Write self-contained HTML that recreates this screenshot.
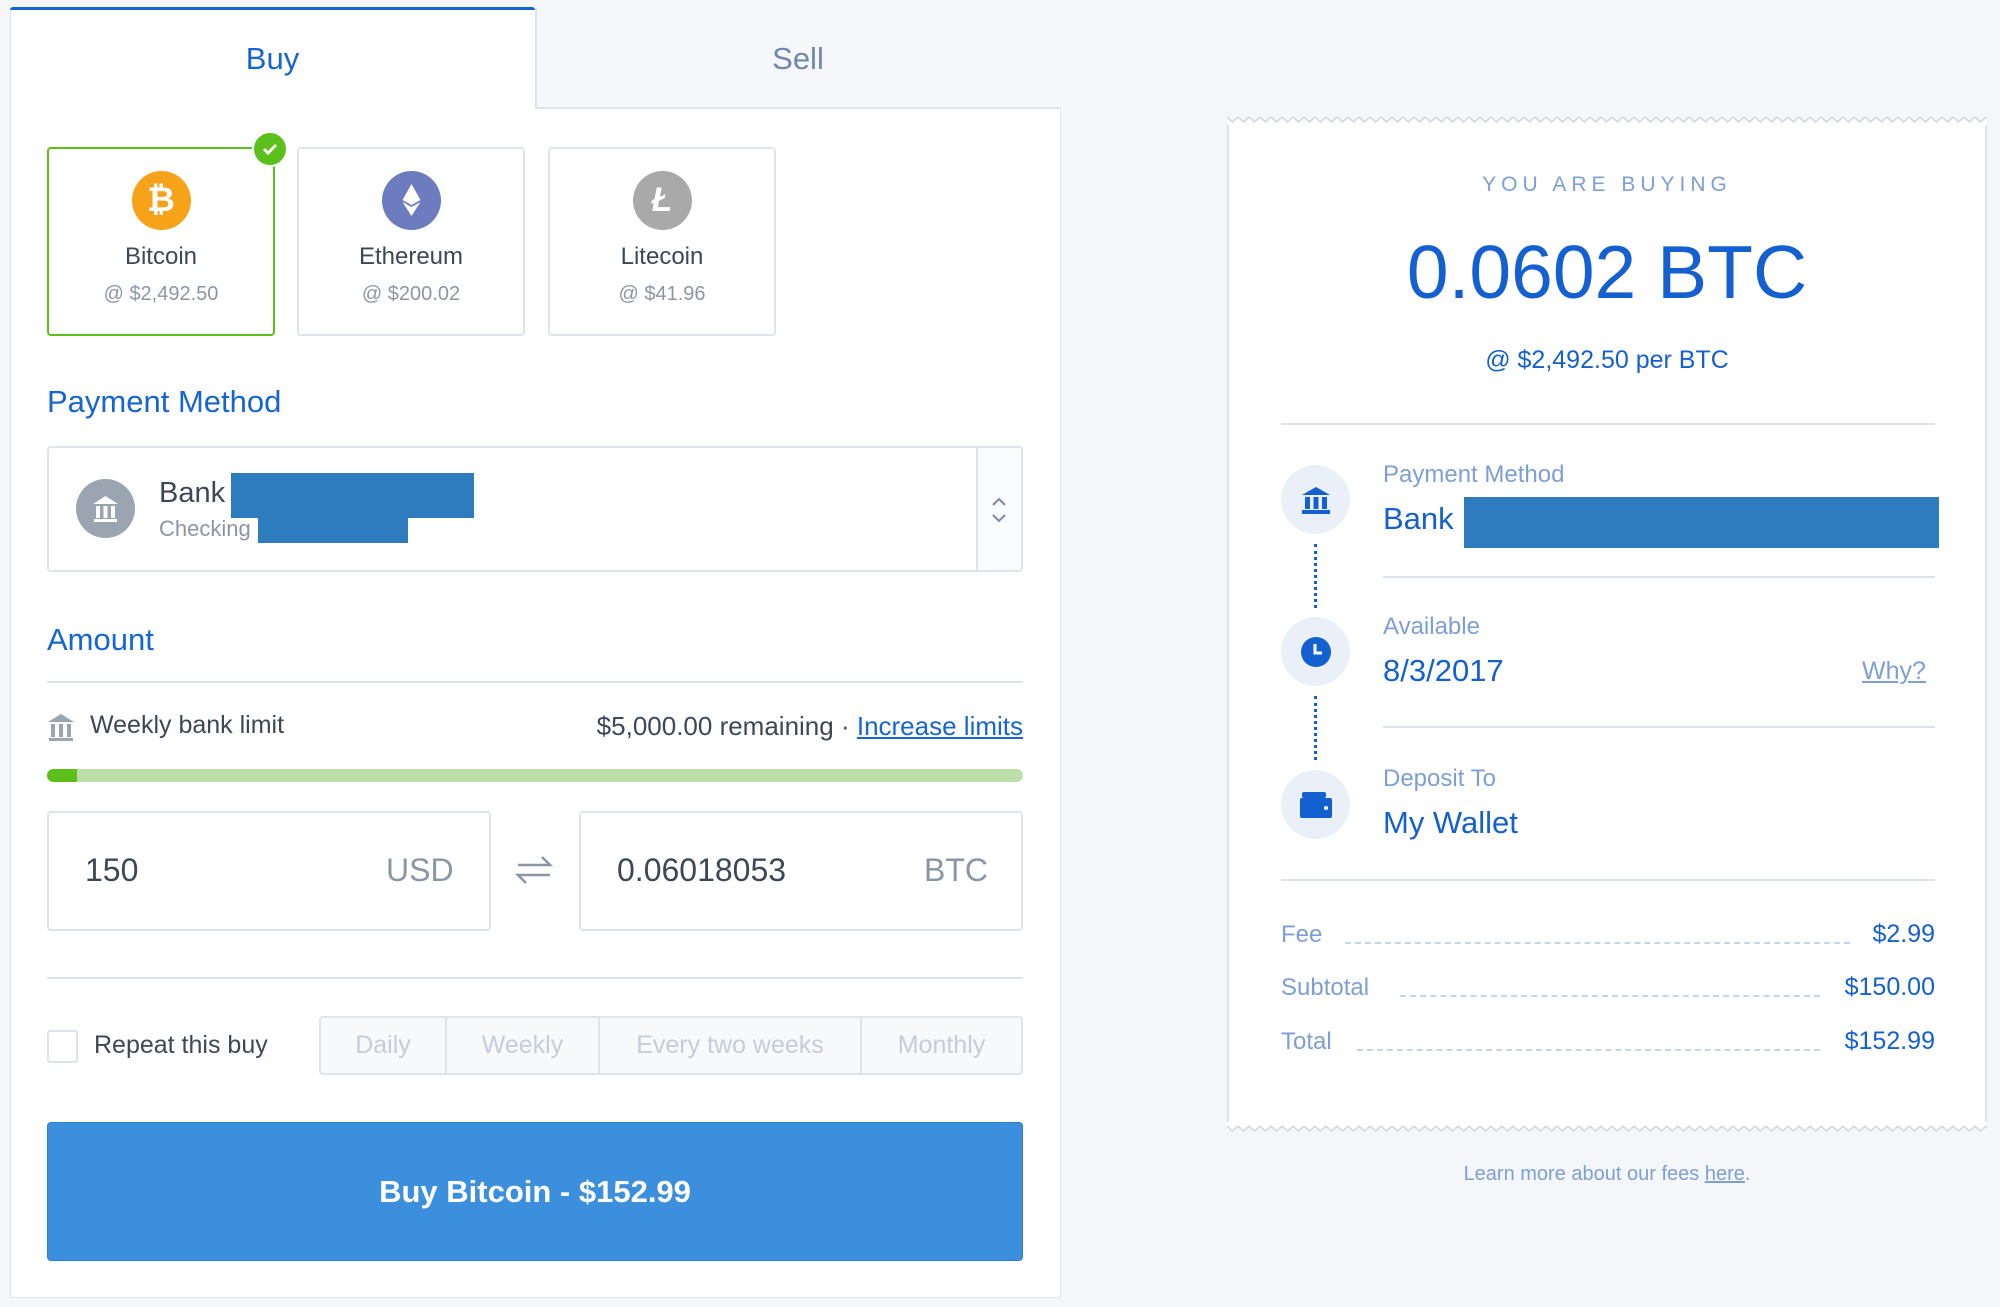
<!DOCTYPE html>
<html><head><meta charset="utf-8">
<style>
*{margin:0;padding:0;box-sizing:border-box}
body{width:2000px;height:1307px;background:#f4f6fa;font-family:"Liberation Sans",sans-serif;position:relative;overflow:hidden}
.a{position:absolute}
.panel{left:10px;top:8px;width:1051px;height:1290px;background:#fff;border:1px solid #dde3ec;border-radius:3px}
.tab{top:8px;height:101px;font-size:31px;display:flex;align-items:center;justify-content:center}
.card{top:147px;width:228px;height:189px;border:2px solid #dfe4ec;border-radius:4px;text-align:center;background:#fff}
.coin{width:59px;height:59px;border-radius:50%;margin:22px auto 0;color:#fff;font-weight:bold;font-size:34px;line-height:59px}
.nm{font-size:24px;color:#3c4858;margin-top:13px}
.pr{font-size:20px;color:#8b96a5;margin-top:12px}
.h{font-size:31px;color:#1565d4;left:47px}
.box{border:2px solid #dfe4ec;border-radius:4px;background:#fff}
.hr{height:2px;background:#dde3ec}
.lbl{font-size:24px;color:#7d9fd6}
.val{font-size:31px;color:#1560d0}
.ic{width:69px;height:69px;border-radius:50%;background:#eaf0f8;left:1281px;display:flex;align-items:center;justify-content:center}
.dots{border-left:3px dotted #1560d0;width:0;left:1314px}
.fl{font-size:24px;color:#7d9fd6;left:1281px}
.fv{font-size:25px;color:#1560d0;right:65px}
.dl{border-top:2px dashed #c6d4ea;height:0}
</style></head><body>
<div class="a panel"></div>
<div class="a" style="left:535px;top:8px;width:526px;height:101px;background:#f5f7fa;border-left:2px solid #dfe4ec;border-bottom:2px solid #dfe4ec"></div>
<div class="a" style="left:10px;top:7px;width:525px;height:3px;background:#1565d4;border-radius:3px 3px 0 0"></div>
<div class="a tab" style="left:10px;width:525px;color:#1565d4">Buy</div>
<div class="a tab" style="left:535px;width:526px;color:#6f87ae">Sell</div>

<div class="a card" style="left:47px;border-color:#5cc01c"><div class="coin" style="background:#f7a31a">&#8383;</div><div class="nm">Bitcoin</div><div class="pr">@ $2,492.50</div></div>
<div class="a" style="left:252px;top:131px;width:36px;height:36px;border-radius:50%;background:#5cc01c;border:2px solid #fff"><svg width="32" height="32" viewBox="0 0 32 32"><path d="M10 16l4 4 8-8" stroke="#fff" stroke-width="3" fill="none"/></svg></div>
<div class="a card" style="left:297px"><div class="coin" style="background:#6d7bbf"><svg width="59" height="59" viewBox="0 0 59 59"><path d="M29.5 13l-9 16 9 5 9-5z" fill="#fff"/><path d="M20.5 31l9 14 9-14-9 5z" fill="#fff"/></svg></div><div class="nm">Ethereum</div><div class="pr">@ $200.02</div></div>
<div class="a card" style="left:548px"><div class="coin" style="background:#a9a9a9;font-style:italic">Ł</div><div class="nm">Litecoin</div><div class="pr">@ $41.96</div></div>

<div class="a h" style="top:384px">Payment Method</div>
<div class="a box" style="left:47px;top:446px;width:976px;height:126px"></div>
<div class="a" style="left:976px;top:448px;width:45px;height:122px;border-left:2px solid #dfe4ec;background:#fafbfd"></div>
<svg class="a" style="left:988px;top:495px" width="22" height="30" viewBox="0 0 22 30"><path d="M5 10l6-6 6 6M5 20l6 6 6-6" stroke="#7d8ba0" stroke-width="2" fill="none"/></svg>
<div class="a" style="left:76px;top:479px;width:59px;height:59px;border-radius:50%;background:#9aa5b1"><svg width="59" height="59" viewBox="0 0 59 59"><path d="M17 25l12.5-8 12.5 8z M18 40h23v3H18z M20 27h4v12h-4z M27.5 27h4v12h-4z M35 27h4v12h-4z" fill="#fff"/></svg></div>
<div class="a" style="left:159px;top:477px;font-size:29px;color:#3c4858">Bank</div>
<div class="a" style="left:159px;top:516px;font-size:22px;color:#8b96a5">Checking</div>
<div class="a" style="left:231px;top:473px;width:243px;height:45px;background:#2e7bbd"></div>
<div class="a" style="left:258px;top:517px;width:150px;height:26px;background:#2e7bbd"></div>

<div class="a h" style="top:622px">Amount</div>
<div class="a hr" style="left:47px;top:681px;width:976px"></div>
<svg class="a" style="left:46px;top:712px" width="30" height="30" viewBox="0 0 30 30"><path d="M2 10L15 2l13 8z M3 26h24v3H3z M5 12h4v13H5z M13 12h4v13h-4z M21 12h4v13h-4z" fill="#9aa5b1"/></svg>
<div class="a" style="left:90px;top:711px;font-size:25px;color:#3c4858">Weekly bank limit</div>
<div class="a" style="right:977px;top:711px;font-size:26px;color:#3c4858;white-space:nowrap;text-align:right;width:600px;left:423px">$5,000.00 remaining · <span style="color:#1565d4;text-decoration:underline">Increase limits</span></div>
<div class="a" style="left:47px;top:769px;width:976px;height:13px;border-radius:7px;background:#bcdfaa"></div>
<div class="a" style="left:47px;top:769px;width:30px;height:13px;border-radius:7px 0 0 7px;background:#5cc01c"></div>

<div class="a box" style="left:47px;top:811px;width:444px;height:120px"></div>
<div class="a" style="left:85px;top:852px;font-size:32px;color:#3c4858">150</div>
<div class="a" style="left:386px;top:852px;font-size:32px;color:#8b96a5">USD</div>
<svg class="a" style="left:514px;top:850px" width="40" height="40" viewBox="0 0 40 40"><path d="M4 15h32l-8-8M36 25H4l8 8" stroke="#8b96a5" stroke-width="2.5" fill="none"/></svg>
<div class="a box" style="left:579px;top:811px;width:444px;height:120px"></div>
<div class="a" style="left:617px;top:852px;font-size:32px;color:#3c4858">0.06018053</div>
<div class="a" style="left:924px;top:852px;font-size:32px;color:#8b96a5">BTC</div>

<div class="a hr" style="left:47px;top:977px;width:976px"></div>
<div class="a" style="left:47px;top:1030px;width:31px;height:33px;border:2px solid #dfe4ec;border-radius:3px"></div>
<div class="a" style="left:94px;top:1031px;font-size:25px;color:#3c4858">Repeat this buy</div>
<div class="a" style="left:319px;top:1016px;width:704px;height:59px;border:2px solid #dfe4ec;border-radius:4px;background:#f7f9fb;display:flex;font-size:25px;color:#c6cdd8">
<div style="width:126px;display:flex;align-items:center;justify-content:center;border-right:2px solid #dfe4ec">Daily</div>
<div style="width:153px;display:flex;align-items:center;justify-content:center;border-right:2px solid #dfe4ec">Weekly</div>
<div style="width:262px;display:flex;align-items:center;justify-content:center;border-right:2px solid #dfe4ec">Every two weeks</div>
<div style="flex:1;display:flex;align-items:center;justify-content:center">Monthly</div></div>

<div class="a" style="left:47px;top:1122px;width:976px;height:139px;background:#3b8fdd;border:1px solid #2f7dc8;border-radius:4px;color:#fff;font-size:31px;font-weight:bold;display:flex;align-items:center;justify-content:center">Buy Bitcoin - $152.99</div>

<!-- receipt -->
<div class="a" style="left:1227px;top:122px;width:760px;height:1005px;background:#fff;border-left:2px solid #dde3ec;border-right:2px solid #dde3ec"></div>
<svg class="a" style="left:1227px;top:114px" width="760" height="12"><defs><pattern id="z" width="11" height="12" patternUnits="userSpaceOnUse"><path d="M0 11V3l5.5 5L11 3v9z" fill="#fff"/><path d="M0 3l5.5 5L11 3" stroke="#cfd5de" stroke-width="1.5" fill="none"/></pattern></defs><rect width="760" height="12" fill="url(#z)"/></svg>
<svg class="a" style="left:1227px;top:1122px" width="760" height="12"><defs><pattern id="z2" width="11" height="12" patternUnits="userSpaceOnUse"><path d="M0 0v4l5.5 5L11 4V0z" fill="#fff"/><path d="M0 4l5.5 5L11 4" stroke="#cfd5de" stroke-width="1.5" fill="none"/></pattern></defs><rect width="760" height="12" fill="url(#z2)"/></svg>

<div class="a" style="left:1227px;width:760px;top:173px;text-align:center;font-size:21px;letter-spacing:5px;color:#7d9fd6">YOU ARE BUYING</div>
<div class="a" style="left:1227px;width:760px;top:229px;text-align:center;font-size:75px;color:#1560d0">0.0602 BTC</div>
<div class="a" style="left:1227px;width:760px;top:346px;text-align:center;font-size:25px;color:#1560d0">@ $2,492.50 per BTC</div>
<div class="a hr" style="left:1281px;top:423px;width:654px"></div>

<div class="a ic" style="top:465px"><svg width="32" height="28" viewBox="0 0 32 28"><path d="M2 9L16 1l14 8z M2 24h28v4H2z M5 11h5v12H5z M13.5 11h5v12h-5z M22 11h5v12h-5z" fill="#1560d0"/></svg></div>
<div class="a dots" style="top:544px;height:64px"></div>
<div class="a ic" style="top:617px"><svg width="32" height="32" viewBox="0 0 32 32"><circle cx="16" cy="16" r="15" fill="#1560d0"/><path d="M15 8v9h7" stroke="#fff" stroke-width="3" fill="none"/></svg></div>
<div class="a dots" style="top:696px;height:64px"></div>
<div class="a ic" style="top:770px"><svg width="32" height="26" viewBox="0 0 32 26"><rect x="2" y="0" width="24" height="6" rx="2" fill="#1560d0"/><rect x="0" y="6" width="32" height="20" rx="2" fill="#1560d0"/><circle cx="26" cy="16" r="2" fill="#fff"/></svg></div>

<div class="a lbl" style="left:1383px;top:461px">Payment Method</div>
<div class="a val" style="left:1383px;top:501px">Bank</div>
<div class="a" style="left:1464px;top:497px;width:475px;height:51px;background:#2e7bbd"></div>
<div class="a hr" style="left:1383px;top:576px;width:552px"></div>
<div class="a lbl" style="left:1383px;top:613px">Available</div>
<div class="a val" style="left:1383px;top:653px">8/3/2017</div>
<div class="a" style="left:1862px;top:657px;font-size:25px;color:#7d9fd6;text-decoration:underline">Why?</div>
<div class="a hr" style="left:1383px;top:726px;width:552px"></div>
<div class="a lbl" style="left:1383px;top:765px">Deposit To</div>
<div class="a val" style="left:1383px;top:805px">My Wallet</div>
<div class="a hr" style="left:1281px;top:879px;width:654px"></div>

<div class="a fl" style="top:921px">Fee</div><div class="a dl" style="left:1345px;width:505px;top:942px"></div><div class="a fv" style="top:920px">$2.99</div>
<div class="a fl" style="top:974px">Subtotal</div><div class="a dl" style="left:1400px;width:420px;top:995px"></div><div class="a fv" style="top:973px">$150.00</div>
<div class="a fl" style="top:1028px">Total</div><div class="a dl" style="left:1357px;width:463px;top:1049px"></div><div class="a fv" style="top:1027px">$152.99</div>

<div class="a" style="left:1227px;width:760px;top:1163px;text-align:center;font-size:20px;color:#7d9fd6">Learn more about our fees <span style="text-decoration:underline">here</span>.</div>
</body></html>
